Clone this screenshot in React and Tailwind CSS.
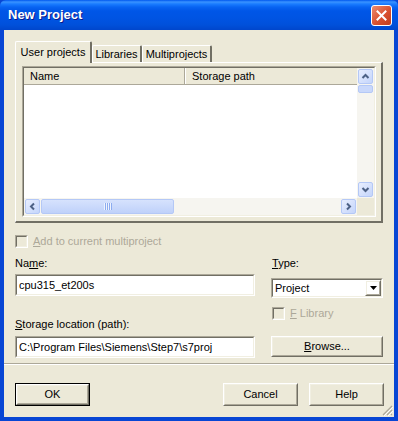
import React from 'react';

const U = ({ children }) => <span className="underline underline-offset-[1px]">{children}</span>;

const Sunken = ({ className = '', inner = 'bg-white', children }) => (
    <div className={`border border-t-[#aca899] border-l-[#aca899] border-b-white border-r-white ${className}`}>
        <div className={`w-full h-full border border-t-[#716f64] border-l-[#716f64] border-b-[#f1efe2] border-r-[#f1efe2] ${inner}`}>
            {children}
        </div>
    </div>
);

const Raised = ({ className = '', children }) => (
    <div className={`border border-t-white border-l-white border-b-[#716f64] border-r-[#716f64] ${className}`}>
        <div className="w-full h-full border border-t-[#f1efe2] border-l-[#f1efe2] border-b-[#aca899] border-r-[#aca899] flex items-center justify-center">
            {children}
        </div>
    </div>
);

const Button = ({ children, className = '', isDefault }) => (
    <div className={`h-[23px] w-[75px] ${isDefault ? 'border border-black' : ''} ${className}`}>
        <Raised className="w-full h-full">{children}</Raised>
    </div>
);

const chevrons = {
    up: 'M1.5 6 L4.5 3 L7.5 6',
    down: 'M1.5 3 L4.5 6 L7.5 3',
    left: 'M6 1.5 L3 4.5 L6 7.5',
    right: 'M3 1.5 L6 4.5 L3 7.5',
};

const ScrollBtn = ({ dir }) => (
    <div className="w-[17px] h-[17px] p-[1px] shrink-0">
        <div className="w-full h-full rounded-[2px] border border-[#b4c8f6] bg-[linear-gradient(135deg,#e8eefe,#c4d5fb)] flex items-center justify-center">
            <svg width="9" height="9" viewBox="0 0 9 9">
                <path d={chevrons[dir]} fill="none" stroke="#4d6185" strokeWidth="2" />
            </svg>
        </div>
    </div>
);

const Checkbox = ({ under, rest }) => (
    <div className="flex items-center h-[13px] gap-[5px] text-[#aca899]">
        <Sunken className="w-[13px] h-[13px]" inner="bg-[#ece9d8]" />
        <span className="leading-[13px]">
            <U>{under}</U>
            {rest}
        </span>
    </div>
);

const Tab = ({ label, active, className = '' }) => (
    <div
        className={`flex items-center justify-center bg-[#ece9d8] border-t border-l border-t-white border-l-white border-r-2 border-r-[#716f64] rounded-t-[2px] ${
            active ? 'h-[22px] -mb-[1px] relative z-10' : 'h-[17px]'
        } ${className}`}
    >
        {label}
    </div>
);

const ListView = () => (
    <Sunken className="w-[354px] h-[151px]">
        <div className="flex flex-col h-full">
            <div className="flex h-[130px]">
                <div className="flex-1 bg-white overflow-hidden">
                    <div className="flex h-[17px] bg-[#ece9d8] border-b border-b-[#aca899]">
                        <div className="w-[161px] shrink-0 pl-[6px] flex items-center border-r border-r-[#aca899]">Name</div>
                        <div className="flex-1 pl-[6px] flex items-center border-l border-l-white">Storage path</div>
                    </div>
                </div>
                <div className="w-[17px] flex flex-col bg-[#f6f5f0]">
                    <ScrollBtn dir="up" />
                    <div className="mx-[1px] h-[8px] rounded-[2px] border border-[#b4c8f6] bg-[#c9d8fb]" />
                    <div className="flex-1" />
                    <ScrollBtn dir="down" />
                </div>
            </div>
            <div className="flex h-[17px]">
                <div className="flex-1 flex bg-[#f6f5f0]">
                    <ScrollBtn dir="left" />
                    <div className="w-[133px] my-[1px] rounded-[2px] border border-[#b4c8f6] bg-[linear-gradient(to_bottom,#d6e2fd,#bfd1fa)] flex items-center justify-center gap-[1px]">
                        {[0, 1, 2, 3].map((i) => (
                            <span key={i} className="w-[1px] h-[7px] bg-[#eef3fe] shadow-[1px_0_0_#8cacf0]" />
                        ))}
                    </div>
                    <div className="flex-1" />
                    <ScrollBtn dir="right" />
                </div>
                <div className="w-[17px] bg-[#ece9d8]" />
            </div>
        </div>
    </Sunken>
);

const App = () => {
    return (
        <div className="w-[398px] h-[421px] flex flex-col bg-[#0846d4] font-['Liberation_Sans',Arial,sans-serif] text-[11px] text-black overflow-hidden">
            {/* title bar */}
            <div className="h-[30px] shrink-0 flex items-center justify-between pl-[8px] pr-[6px] rounded-t-[6px] bg-[linear-gradient(to_bottom,#0058ee_0px,#3a93ff_2px,#1a7cff_4px,#0864f2_7px,#0056e7_11px,#0054e3_18px,#0050da_25px,#0046cc_30px)]">
                <span className="text-white font-bold text-[13px] [text-shadow:1px_1px_#0c1a8a]">New Project</span>
                <div className="w-[21px] h-[21px] rounded-[3px] border border-white bg-[linear-gradient(135deg,#ec8c70,#d9512f_55%,#c23d1d)] flex items-center justify-center">
                    <svg width="11" height="11" viewBox="0 0 11 11">
                        <path d="M1.5 1.5 L9.5 9.5 M9.5 1.5 L1.5 9.5" stroke="white" strokeWidth="2" strokeLinecap="square" />
                    </svg>
                </div>
            </div>

            {/* client area */}
            <div className="relative mx-[4px] mb-[4px] flex-1 bg-[#ece9d8] flex flex-col">
                <div className="mt-[11px] ml-[11px] flex items-end h-[21px]">
                    <Tab label="User projects" active className="w-[77px]" />
                    <Tab label="Libraries" className="w-[50px]" />
                    <Tab label="Multiprojects" className="w-[70px]" />
                </div>
                <div className="ml-[11px] w-[368px] h-[161px] border-t border-l border-t-white border-l-white border-r-2 border-b-2 border-r-[#716f64] border-b-[#716f64] pt-[3px] pl-[6px]">
                    <ListView />
                </div>

                <div className="mt-[12px] ml-[11px]">
                    <Checkbox under="A" rest="dd to current multiproject" />
                </div>

                <div className="mt-[9px] ml-[11px] flex items-start">
                    <div className="w-[240px] flex flex-col">
                        <span className="h-[13px] leading-[13px]">
                            Na<U>m</U>e:
                        </span>
                        <Sunken className="mt-[4px] h-[22px]">
                            <div className="h-full flex items-center pl-[2px]">cpu315_et200s</div>
                        </Sunken>
                        <span className="mt-[22px] h-[13px] leading-[13px]">
                            <U>S</U>torage location (path):
                        </span>
                        <Sunken className="mt-[5px] h-[22px]">
                            <div className="h-full flex items-center pl-[2px]">C:\Program Files\Siemens\Step7\s7proj</div>
                        </Sunken>
                    </div>
                    <div className="ml-[16px] w-[112px] flex flex-col">
                        <span className="h-[13px] leading-[13px] pl-[1px]">
                            <U>T</U>ype:
                        </span>
                        <Sunken className="mt-[8px] h-[20px]">
                            <div className="h-full flex items-center justify-between">
                                <span className="pl-[2px]">Project</span>
                                <Raised className="w-[16px] h-full">
                                    <svg width="7" height="4" viewBox="0 0 7 4">
                                        <path d="M0 0 H7 L3.5 4 Z" fill="black" />
                                    </svg>
                                </Raised>
                            </div>
                        </Sunken>
                        <div className="mt-[9px] pl-[1px]">
                            <Checkbox under="F" rest=" Library" />
                        </div>
                        <Button className="mt-[16px] !h-[21px] !w-[112px]">
                            <span>
                                <U>B</U>rowse...
                            </span>
                        </Button>
                    </div>
                </div>

                <div className="mt-[5px] h-[2px] border-t border-t-[#aca899] border-b border-b-white" />

                <div className="mt-[18px] ml-[11px] mr-[10px] flex">
                    <Button isDefault>OK</Button>
                    <Button className="ml-auto">Cancel</Button>
                    <Button className="ml-[11px]">Help</Button>
                </div>

                {/* size grip */}
                <svg className="absolute right-[1px] bottom-[1px]" width="12" height="12" viewBox="0 0 12 12">
                    <path d="M11 2 L2 11 M11 6 L6 11 M11 10 L10 11" stroke="#aca899" strokeWidth="1.2" />
                    <path d="M12 3 L3 12 M12 7 L7 12" stroke="white" strokeWidth="1" />
                </svg>
            </div>
        </div>
    );
};

export default App;
